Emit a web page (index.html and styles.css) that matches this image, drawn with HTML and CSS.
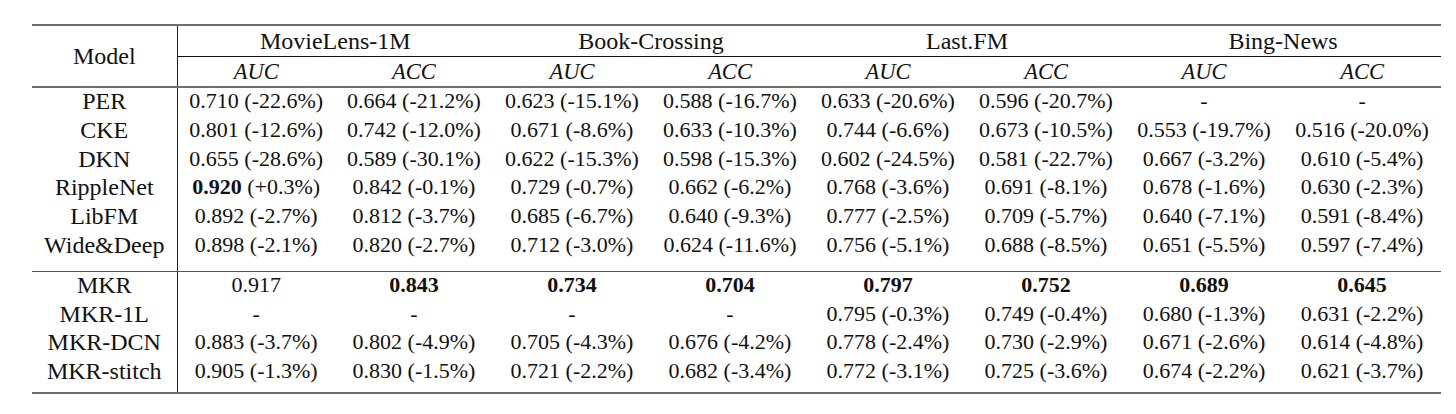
FILE: index.html
```html
<!DOCTYPE html>
<html>
<head>
<meta charset="utf-8">
<link rel="stylesheet" href="styles.css">
</head>
<body>
<div class="page">
<table class="results">
  <colgroup>
    <col class="c-model">
    <col class="c-val"><col class="c-val"><col class="c-val"><col class="c-val">
    <col class="c-val"><col class="c-val"><col class="c-val"><col class="c-val">
  </colgroup>
  <thead>
    <tr class="h1">
      <th rowspan="2" class="model-h">Model</th>
      <th colspan="2" class="ds">MovieLens-1M</th>
      <th colspan="2" class="ds">Book-Crossing</th>
      <th colspan="2" class="ds">Last.FM</th>
      <th colspan="2" class="ds">Bing-News</th>
    </tr>
    <tr class="h2">
      <th class="met">AUC</th><th class="met">ACC</th>
      <th class="met">AUC</th><th class="met">ACC</th>
      <th class="met">AUC</th><th class="met">ACC</th>
      <th class="met">AUC</th><th class="met">ACC</th>
    </tr>
  </thead>
  <tbody class="base">
    <tr class="first"><td class="name">PER</td><td>0.710 (-22.6%)</td><td>0.664 (-21.2%)</td><td>0.623 (-15.1%)</td><td>0.588 (-16.7%)</td><td>0.633 (-20.6%)</td><td>0.596 (-20.7%)</td><td>-</td><td>-</td></tr>
    <tr><td class="name">CKE</td><td>0.801 (-12.6%)</td><td>0.742 (-12.0%)</td><td>0.671 (-8.6%)</td><td>0.633 (-10.3%)</td><td>0.744 (-6.6%)</td><td>0.673 (-10.5%)</td><td>0.553 (-19.7%)</td><td>0.516 (-20.0%)</td></tr>
    <tr><td class="name">DKN</td><td>0.655 (-28.6%)</td><td>0.589 (-30.1%)</td><td>0.622 (-15.3%)</td><td>0.598 (-15.3%)</td><td>0.602 (-24.5%)</td><td>0.581 (-22.7%)</td><td>0.667 (-3.2%)</td><td>0.610 (-5.4%)</td></tr>
    <tr><td class="name">RippleNet</td><td><b>0.920</b> (+0.3%)</td><td>0.842 (-0.1%)</td><td>0.729 (-0.7%)</td><td>0.662 (-6.2%)</td><td>0.768 (-3.6%)</td><td>0.691 (-8.1%)</td><td>0.678 (-1.6%)</td><td>0.630 (-2.3%)</td></tr>
    <tr><td class="name">LibFM</td><td>0.892 (-2.7%)</td><td>0.812 (-3.7%)</td><td>0.685 (-6.7%)</td><td>0.640 (-9.3%)</td><td>0.777 (-2.5%)</td><td>0.709 (-5.7%)</td><td>0.640 (-7.1%)</td><td>0.591 (-8.4%)</td></tr>
    <tr class="last"><td class="name">Wide&amp;Deep</td><td>0.898 (-2.1%)</td><td>0.820 (-2.7%)</td><td>0.712 (-3.0%)</td><td>0.624 (-11.6%)</td><td>0.756 (-5.1%)</td><td>0.688 (-8.5%)</td><td>0.651 (-5.5%)</td><td>0.597 (-7.4%)</td></tr>
  </tbody>
  <tbody class="ours">
    <tr class="first"><td class="name">MKR</td><td>0.917</td><td><b>0.843</b></td><td><b>0.734</b></td><td><b>0.704</b></td><td><b>0.797</b></td><td><b>0.752</b></td><td><b>0.689</b></td><td><b>0.645</b></td></tr>
    <tr><td class="name">MKR-1L</td><td>-</td><td>-</td><td>-</td><td>-</td><td>0.795 (-0.3%)</td><td>0.749 (-0.4%)</td><td>0.680 (-1.3%)</td><td>0.631 (-2.2%)</td></tr>
    <tr><td class="name">MKR-DCN</td><td>0.883 (-3.7%)</td><td>0.802 (-4.9%)</td><td>0.705 (-4.3%)</td><td>0.676 (-4.2%)</td><td>0.778 (-2.4%)</td><td>0.730 (-2.9%)</td><td>0.671 (-2.6%)</td><td>0.614 (-4.8%)</td></tr>
    <tr class="last"><td class="name">MKR-stitch</td><td>0.905 (-1.3%)</td><td>0.830 (-1.5%)</td><td>0.721 (-2.2%)</td><td>0.682 (-3.4%)</td><td>0.772 (-3.1%)</td><td>0.725 (-3.6%)</td><td>0.674 (-2.2%)</td><td>0.621 (-3.7%)</td></tr>
  </tbody>
</table>
</div>
</body>
</html>
```

FILE: styles.css
```css
html, body {
  margin: 0;
  padding: 0;
  background: #ffffff;
}

.page {
  padding: 24px 0 0 32px;
  font-family: "Liberation Serif", "Times New Roman", serif;
  color: #111111;
}

.results {
  border-collapse: collapse;
  table-layout: fixed;
  width: 1409px;
  font-size: 22px;
}

.c-model { width: 145px; }
.c-val { width: 158px; }

.results th,
.results td {
  padding: 0;
  text-align: center;
  white-space: nowrap;
  font-weight: normal;
}

.results b {
  font-weight: bold;
}

.results thead th {
  line-height: 29px;
}

.results th.ds,
.results th.model-h,
.results td.name {
  font-size: 24px;
}

.results th.met {
  font-size: 22.5px;
  font-style: italic;
}

.results thead tr.h1 th {
  border-top: 2px solid #6e6e6e;
  height: 30px;
  vertical-align: middle;
}

.results thead tr.h1 th.ds {
  border-bottom: 1px solid #111111;
}

.results thead tr.h2 th {
  height: 29px;
  border-bottom: 2px solid #6e6e6e;
}

.results th.model-h {
  border-bottom: 2px solid #6e6e6e;
}

.results .model-h,
.results td.name {
  border-right: 1px solid #222222;
}

.results tbody td {
  line-height: 26.8px;
  padding-bottom: 2px;
}

.results tbody.base tr.last td {
  padding-bottom: 12px;
  border-bottom: 1.5px solid #555555;
}

.results tbody.ours tr.last td {
  padding-bottom: 7px;
  border-bottom: 2px solid #6e6e6e;
}
```
